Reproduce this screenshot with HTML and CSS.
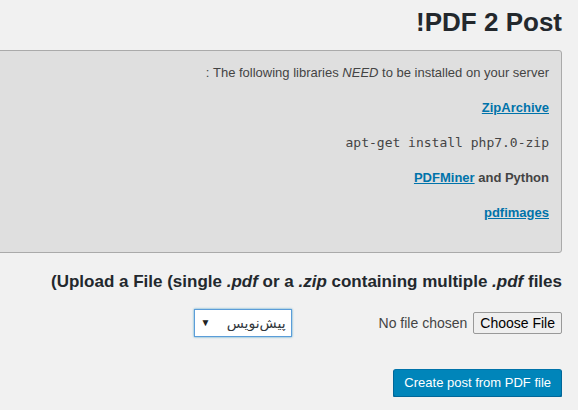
FILE: index.html
```html
<!DOCTYPE html>
<html dir="rtl" lang="fa">
<head>
    <title>PDF 2 Post</title>
    <link rel="stylesheet" href="styles.css">
</head>
<body>
    <div class="wrap">
        <h1>PDF 2 Post!</h1>
        <div class="notice">
            <p>The following libraries <em>NEED</em> to be installed on your server :</p>
            <p><strong><a href="#">ZipArchive</a></strong></p>
            <p><code>apt-get install php7.0-zip</code></p>
            <p><strong><a href="#">PDFMiner</a> and Python</strong></p>
            <p><strong><a href="#">pdfimages</a></strong></p>
        </div>
        <form class="upload">
            <h2>(Upload a File (single <em>.pdf</em> or a <em>.zip</em> containing multiple <em>.pdf</em> files</h2>
            <div class="row">
                <span class="file">
                    <button type="button" class="file-btn">Choose File</button>
                    <span class="file-name">No file chosen</span>
                </span>
                <span class="select">
                    <select class="status">
                        <option>پیش‌نویس</option>
                        <option>منتشر شده</option>
                    </select>
                </span>
            </div>
            <div class="actions">
                <button type="button" class="button-primary">Create post from PDF file</button>
            </div>
        </form>
    </div>
</body>
</html>
```

FILE: styles.css
```css
html { background: #f1f1f1; }
body { margin: 0; font-family: "Liberation Sans", Arial, "DejaVu Sans", sans-serif; font-size: 14px; color: #444; overflow: hidden; }
.wrap { margin: 0 16px 0 0; }
h1 { font-size: 26px; font-weight: bold; color: #23282d; line-height: 1.3; margin: 6px 0 10px; }
.notice { background: #dfdfdf; border: 1px solid #aaa; border-radius: 3px; padding: 11px 12px 15px; margin-left: -10px; }
.notice p { margin: 0 0 14px; line-height: 21px; font-size: 13px; }
.notice a { color: #0073aa; text-decoration: underline; }
code { font-family: "DejaVu Sans Mono", monospace; font-size: 13px; color: #444; direction: ltr; }
.upload h2 { direction: ltr; text-align: right; font-size: 17px; color: #23282d; line-height: 1.3; margin: 18px 0 16px; }
.row { display: flex; align-items: center; gap: 87px; }
.file { display: flex; align-items: center; gap: 6px; }
.file-btn { font-family: inherit; font-size: 14px; color: #000; background: #efefef; border: 1px solid #999; border-radius: 2px; padding: 1px 6px; height: 22px; }
.file-name { color: #444; }
.select { position: relative; display: inline-block; }
.select::after { content: "\25BC"; position: absolute; left: 7px; top: 8px; font-size: 10px; color: #222; pointer-events: none; }
.status { appearance: none; -webkit-appearance: none; font-family: "Liberation Sans", "DejaVu Sans", sans-serif; font-size: 14px; color: #32373c; width: 98px; height: 28px; background: #fff; border: 1px solid #5b9dd9; box-shadow: 0 0 2px rgba(30, 140, 190, 0.8); border-radius: 0; padding: 2px 5px 2px 24px; }
.actions { margin-top: 32px; display: flex; }
.button-primary { font-family: inherit; font-size: 13px; color: #fff; background: #0085ba; border: 1px solid #0073aa; border-color: #0073aa #006799 #006799; border-radius: 3px; box-shadow: 0 1px 0 #006799; height: 28px; line-height: 26px; padding: 0 10px 1px; }
```
